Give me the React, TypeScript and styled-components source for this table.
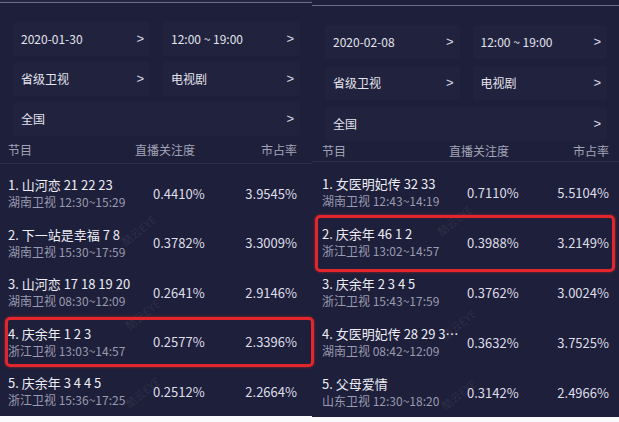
import styled, { createGlobalStyle } from 'styled-components';

const GlobalStyle = createGlobalStyle`
  html, body {
    margin: 0;
    padding: 0;
    background: #fafafc;
  }
  body {
    font-family: "Noto Sans CJK SC", "Noto Sans", sans-serif;
  }
`;

type Show = {
  title: string;
  channel: string;
  live: string;
  share: string;
  mark?: boolean;
};

type Board = {
  width: number;
  height: number;
  top: number;
  topColor: string;
  filterGap: number;
  headH: number;
  rowH: number;
  padR: number;
  padL: number;
  mark: { t: number; b: number; l: number; r: number };
  date: string;
  shows: Show[];
  marks: [number, number][];
};

const boards: Board[] = [
  {
    width: 312,
    height: 416,
    top: 2,
    topColor: '#262743',
    filterGap: 6,
    headH: 32,
    rowH: 49.5,
    padR: 15,
    padL: 8,
    mark: { t: 0, b: 0, l: 5, r: -2 },
    date: '2020-01-30',
    shows: [
      { title: '1. 山河恋 21 22 23', channel: '湖南卫视 12:30~15:29', live: '0.4410%', share: '3.9545%' },
      { title: '2. 下一站是幸福 7 8', channel: '湖南卫视 15:30~17:59', live: '0.3782%', share: '3.3009%' },
      { title: '3. 山河恋 17 18 19 20', channel: '湖南卫视 08:30~12:09', live: '0.2641%', share: '2.9146%' },
      { title: '4. 庆余年 1 2 3', channel: '浙江卫视 13:03~14:57', live: '0.2577%', share: '2.3396%', mark: true },
      { title: '5. 庆余年 3 4 4 5', channel: '浙江卫视 15:36~17:25', live: '0.2512%', share: '2.2664%' },
    ],
    marks: [[118, 222], [122, 306], [122, 384]],
  },
  {
    width: 307,
    height: 417,
    top: 7,
    topColor: '#1e1f3b',
    filterGap: 7,
    headH: 30,
    rowH: 50,
    padR: 10,
    padL: 10,
    mark: { t: -2, b: -5, l: 3, r: 4 },
    date: '2020-02-08',
    shows: [
      { title: '1. 女医明妃传 32 33', channel: '湖南卫视 12:43~14:19', live: '0.7110%', share: '5.5104%' },
      { title: '2. 庆余年 46 1 2', channel: '浙江卫视 13:02~14:57', live: '0.3988%', share: '3.2149%', mark: true },
      { title: '3. 庆余年 2 3 4 5', channel: '浙江卫视 15:43~17:59', live: '0.3762%', share: '3.0024%' },
      { title: '4. 女医明妃传 28 29 30 31', channel: '湖南卫视 08:42~12:09', live: '0.3632%', share: '3.7525%' },
      { title: '5. 父母爱情', channel: '山东卫视 12:30~18:20', live: '0.3142%', share: '2.4966%' },
    ],
    marks: [[122, 212], [126, 316], [126, 386]],
  },
];

export default function App() {
  return (
    <>
      <GlobalStyle />
      <Page>
        {boards.map((b) => (
          <Panel key={b.date} $w={b.width} $h={b.height}>
            <TopStrip $h={b.top} $bg={b.topColor} />
            <Filters $gap={b.filterGap}>
              <FilterBox>
                <span>{b.date}</span>
                <Chevron>&gt;</Chevron>
              </FilterBox>
              <FilterBox>
                <span>12:00 ~ 19:00</span>
                <Chevron>&gt;</Chevron>
              </FilterBox>
              <FilterBox>
                <span>省级卫视</span>
                <Chevron>&gt;</Chevron>
              </FilterBox>
              <FilterBox>
                <span>电视剧</span>
                <Chevron>&gt;</Chevron>
              </FilterBox>
              <FilterBox $wide>
                <span>全国</span>
                <Chevron>&gt;</Chevron>
              </FilterBox>
            </Filters>
            <Head $h={b.headH} $pl={b.padL} $pr={b.padR}>
              <span>节目</span>
              <span>直播关注度</span>
              <span>市占率</span>
            </Head>
            <Rows>
              {b.shows.map((s) => (
                <ShowRow key={s.title} $h={b.rowH} $pl={b.padL} $pr={b.padR}>
                  <ShowInfo>
                    <ShowTitle>{s.title}</ShowTitle>
                    <ShowChannel>{s.channel}</ShowChannel>
                  </ShowInfo>
                  <Value>{s.live}</Value>
                  <Value $right>{s.share}</Value>
                  {s.mark && <Highlight $t={b.mark.t} $b={b.mark.b} $l={b.mark.l} $r={b.mark.r} />}
                </ShowRow>
              ))}
            </Rows>
            {b.marks.map(([x, y]) => (
              <Watermark key={`${x}-${y}`} style={{ left: x, top: y }}>
                酷云EYE
              </Watermark>
            ))}
          </Panel>
        ))}
      </Page>
    </>
  );
}

const Page = styled.div`
  display: flex;
  width: 619px;
  height: 422px;
  background: #fafafc;
`;

const Panel = styled.div<{ $w: number; $h: number }>`
  position: relative;
  width: ${(p) => p.$w}px;
  height: ${(p) => p.$h}px;
  flex-shrink: 0;
  display: flex;
  flex-direction: column;
  background: #1e1f3a;
  color: #e6e6ef;
`;

const TopStrip = styled.div<{ $h: number; $bg: string }>`
  height: ${(p) => p.$h}px;
  background: ${(p) => p.$bg};
  border-bottom: 1px solid #6c6d8c;
`;

const Filters = styled.div<{ $gap: number }>`
  display: grid;
  grid-template-columns: 1fr 1fr;
  gap: ${(p) => p.$gap}px 13px;
  margin-top: 19px;
  padding: 0 12px 0 13px;
`;

const FilterBox = styled.div<{ $wide?: boolean }>`
  grid-column: ${(p) => (p.$wide ? '1 / 3' : 'auto')};
  height: 34px;
  display: flex;
  align-items: center;
  justify-content: space-between;
  padding: 0 6px 0 8px;
  background: #21223e;
  border-radius: 2px;
  font-size: 12px;
  color: #e4e4ee;
`;

const Chevron = styled.span`
  font-family: "Liberation Sans", sans-serif;
  font-size: 13px;
  color: #dcdce8;
`;

const Head = styled.div<{ $h: number; $pl: number; $pr: number }>`
  height: ${(p) => p.$h}px;
  display: grid;
  grid-template-columns: 127px 1fr auto;
  align-items: center;
  padding: 0 ${(p) => p.$pr}px 0 ${(p) => p.$pl}px;
  border-bottom: 1px solid #2d2e4c;
  font-size: 12px;
  color: #a3a4b8;
`;

const Rows = styled.div`
  padding-top: 5px;
`;

const ShowRow = styled.div<{ $h: number; $pl: number; $pr: number }>`
  position: relative;
  height: ${(p) => p.$h}px;
  display: grid;
  grid-template-columns: 145px 1fr auto;
  align-items: center;
  padding: 0 ${(p) => p.$pr}px 0 ${(p) => p.$pl}px;
  box-sizing: border-box;
`;

const ShowInfo = styled.div`
  display: flex;
  flex-direction: column;
  min-width: 0;
  padding-right: 8px;
`;

const ShowTitle = styled.div`
  font-size: 13px;
  line-height: 17px;
  color: #ededf5;
  white-space: nowrap;
  overflow: hidden;
  text-overflow: ellipsis;
`;

const ShowChannel = styled.div`
  font-size: 12px;
  line-height: 17px;
  color: #9a9bb0;
  white-space: nowrap;
`;

const Value = styled.div<{ $right?: boolean }>`
  font-size: 13px;
  color: #dedee9;
  text-align: ${(p) => (p.$right ? 'right' : 'left')};
`;

const Highlight = styled.div<{ $t: number; $b: number; $l: number; $r: number }>`
  position: absolute;
  top: ${(p) => p.$t}px;
  bottom: ${(p) => p.$b}px;
  left: ${(p) => p.$l}px;
  right: ${(p) => p.$r}px;
  z-index: 2;
  border: 3px solid #e3262b;
  border-radius: 5px;
  box-shadow: 0 0 3px rgba(255, 50, 50, 0.55);
  pointer-events: none;
`;

const Watermark = styled.div`
  position: absolute;
  font-size: 11px;
  color: rgba(255, 255, 255, 0.08);
  transform: rotate(-38deg);
  pointer-events: none;
`;
